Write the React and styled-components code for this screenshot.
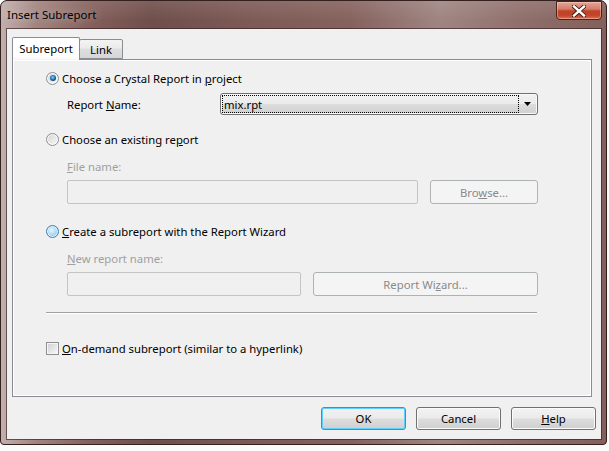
import React from 'react';
import styled, { createGlobalStyle, css } from 'styled-components';

const Global = createGlobalStyle`
  html, body { margin: 0; padding: 0; background: #fbfbfb; }
  body { font-family: "Segoe UI", "Noto Sans", sans-serif; font-size: 11.3px; color: #000; }
  * { box-sizing: border-box; }
  u { text-decoration: underline; text-underline-offset: 1px; text-decoration-thickness: 1px; }
`;

const Page = styled.div`
  width: 609px;
  height: 451px;
  overflow: hidden;
`;

const Window = styled.div`
  width: 607px;
  height: 445px;
  border: 1px solid #33201f;
  border-radius: 7px 7px 4px 4px;
  padding: 0 5px 5px 6px;
  display: flex;
  flex-direction: column;
  background-color: #835f5b;
  background-image:
    linear-gradient(180deg, rgba(255, 255, 255, 0.1) 0px, rgba(255, 255, 255, 0) 20px),
    linear-gradient(90deg, #c2b0ae 0px, #a2847f 35px, #845f5b 90px, #6f4e4b 150px, #7d5a56 250px, #86625e 350px, #9f8582 440px, #8f6f6b 520px, #825f5b 607px);
`;

const TitleBar = styled.div`
  height: 28px;
  display: flex;
  align-items: flex-start;
`;

const Title = styled.div`
  height: 28px;
  line-height: 28px;
  font-size: 11.5px;
  color: #000;
  text-shadow: 0 0 8px rgba(255, 255, 255, 0.55);
`;

const CloseButton = styled.div`
  margin-left: auto;
  margin-right: -1px;
  width: 46px;
  height: 19px;
  border: 1px solid #4a211b;
  border-radius: 0 0 4px 4px;
  display: grid;
  place-items: center;
  background: linear-gradient(180deg, #e6a595 0%, #d47d69 42%, #bf4429 52%, #c4432a 78%, #d96f52 100%);
  box-shadow: inset 0 0 0 1px rgba(255, 215, 205, 0.45);
`;

const Client = styled.div`
  width: 594px;
  height: 410px;
  background: #f0f0f0;
  box-shadow: 0 0 0 1px rgba(50, 30, 30, 0.65);
  padding: 8px 5px 0 5px;
  display: flex;
  flex-direction: column;
`;

const TabStrip = styled.div`
  height: 22px;
  display: flex;
  align-items: flex-end;
`;

const Tab = styled.div`
  position: relative;
  height: ${p => (p.$active ? 23 : 20)}px;
  width: ${p => p.$w}px;
  margin-left: ${p => (p.$active ? 0 : -1)}px;
  margin-bottom: ${p => (p.$active ? -1 : 0)}px;
  z-index: ${p => (p.$active ? 2 : 1)};
  border: 1px solid #898c95;
  border-bottom: ${p => (p.$active ? 'none' : '1px solid #898c95')};
  border-radius: 2px 2px 0 0;
  display: flex;
  align-items: center;
  justify-content: center;
  padding-bottom: ${p => (p.$active ? 1 : 0)}px;
  background: ${p =>
    p.$active
      ? 'linear-gradient(180deg, #ffffff 0%, #ffffff 85%, #f4f4f4 100%)'
      : 'linear-gradient(180deg, #f3f3f3 0%, #ebebeb 45%, #dedede 50%, #d6d6d6 100%)'};
`;

const Panel = styled.div`
  width: 580px;
  height: 338px;
  border: 1px solid #898c95;
  background: #f0f0f0;
  box-shadow: inset -1px -1px 0 #ffffff, inset 1px 1px 0 #ffffff;
  padding-left: 33px;
  display: flex;
  flex-direction: column;
`;

const OptionRow = styled.label`
  display: flex;
  align-items: center;
  gap: 3px;
  height: 16px;
  margin-top: ${p => p.$mt}px;
  color: ${p => (p.$disabled ? '#999' : '#000')};
`;

const FieldRow = styled.div`
  display: flex;
  align-items: center;
  height: ${p => p.$h}px;
  margin-top: ${p => p.$mt}px;
  margin-left: 21px;
  gap: ${p => p.$gap || 0}px;
  color: ${p => (p.$disabled ? '#a0a0a0' : '#000')};
`;

const FieldLabel = styled.span`
  width: ${p => (p.$w ? `${p.$w}px` : 'auto')};
  flex: none;
`;

const Radio = styled.span`
  flex: none;
  width: 13px;
  height: 13px;
  border-radius: 50%;
  display: grid;
  place-items: center;
  border: 1px solid ${p => (p.$hot ? '#3c7fb1' : '#8e8f8f')};
  box-shadow: inset 0 0 0 1px ${p => (p.$hot ? '#e4f4fd' : '#fbfbfb')};
  background: ${p =>
    p.$hot
      ? 'radial-gradient(circle at 42% 38%, #e8f6fe 0px, #bfe3f9 3px, #98d0f2 6px)'
      : 'linear-gradient(135deg, #d2d2d2 0%, #e6e6e6 50%, #f8f8f8 100%)'};
  ${p =>
    p.$checked &&
    css`
      &::after {
        content: '';
        width: 6px;
        height: 6px;
        border-radius: 50%;
        background: radial-gradient(circle at 45% 40%, #8ad2fb 0px, #2b7fc4 2px, #0e3d6c 3.5px);
      }
    `}
`;

const Checkbox = styled.span`
  flex: none;
  width: 13px;
  height: 13px;
  border: 1px solid #8f8f8f;
  box-shadow: inset 0 0 0 1px #f6f6f6;
  background: linear-gradient(135deg, #cfcfcf 0%, #e4e4e4 50%, #fbfbfb 100%);
`;

const Combo = styled.div`
  width: 318px;
  height: 22px;
  border: 1px solid #707070;
  border-radius: 3px;
  display: flex;
  align-items: stretch;
  padding: 1px;
  background: linear-gradient(180deg, #f2f2f2 0%, #ebebeb 48%, #dddddd 52%, #cfcfcf 100%);
  box-shadow: inset 0 0 0 1px #fafafa;
`;

const ComboValue = styled.div`
  flex: 1;
  border: 1px dotted #000;
  padding-left: 1px;
  display: flex;
  align-items: center;
`;

const ComboArrow = styled.div`
  width: 17px;
  display: grid;
  place-items: center;
`;

const TextBox = styled.div`
  width: ${p => p.$w}px;
  height: 24px;
  border: 1px solid #c4c4c4;
  border-radius: 2px;
  background: #f0f0f0;
`;

const Button = styled.button`
  width: ${p => p.$w}px;
  height: ${p => p.$h || 23}px;
  flex: none;
  padding: 0;
  font: inherit;
  border-radius: 3px;
  border: 1px solid #707070;
  color: #000;
  background: linear-gradient(180deg, #f2f2f2 0%, #ebebeb 48%, #dddddd 52%, #cfcfcf 100%);
  box-shadow: inset 0 0 0 1px #fbfbfb;
  ${p =>
    p.$default &&
    css`
      border-color: #3c8fce;
      box-shadow: inset 0 0 0 1px #5fd0fb;
    `}
  ${p =>
    p.disabled &&
    css`
      border-color: #adb2b5;
      background: #f4f4f4;
      color: #8a8a8a;
      box-shadow: none;
    `}
`;

const Separator = styled.div`
  width: 491px;
  height: 2px;
  margin-top: ${p => p.$mt}px;
  border-top: 1px solid #a0a0a0;
  border-bottom: 1px solid #ffffff;
`;

const ButtonRow = styled.div`
  display: flex;
  justify-content: flex-end;
  gap: 10px;
  margin-top: 10px;
`;

export default function App() {
  return (
    <Page>
      <Global />
      <Window>
        <TitleBar>
          <Title>Insert Subreport</Title>
          <CloseButton>
            <svg width="14" height="12" viewBox="0 0 14 12">
              <path d="M2 1.5 L12 10.5 M12 1.5 L2 10.5" stroke="#3a1510" strokeWidth="4.2" strokeLinecap="square" />
              <path d="M2 1.5 L12 10.5 M12 1.5 L2 10.5" stroke="#ffffff" strokeWidth="2.4" strokeLinecap="square" />
            </svg>
          </CloseButton>
        </TitleBar>
        <Client>
          <TabStrip>
            <Tab $active $w={68}>Subreport</Tab>
            <Tab $w={44}>Link</Tab>
          </TabStrip>
          <Panel>
            <OptionRow $mt={10}>
              <Radio $checked />
              <span>Choose a Crystal Report in <u>p</u>roject</span>
            </OptionRow>
            <FieldRow $h={22} $mt={7}>
              <FieldLabel $w={153}>Report <u>N</u>ame:</FieldLabel>
              <Combo>
                <ComboValue>mix.rpt</ComboValue>
                <ComboArrow>
                  <svg width="7" height="4" viewBox="0 0 7 4">
                    <path d="M0 0 H7 L3.5 4 Z" fill="#000" />
                  </svg>
                </ComboArrow>
              </Combo>
            </FieldRow>
            <OptionRow $mt={16}>
              <Radio />
              <span>Choose an existing re<u>p</u>ort</span>
            </OptionRow>
            <FieldRow $h={16} $mt={11} $disabled>
              <FieldLabel><u>F</u>ile name:</FieldLabel>
            </FieldRow>
            <FieldRow $h={24} $mt={6} $gap={12}>
              <TextBox $w={351} />
              <Button $w={108} $h={24} disabled>Bro<u>w</u>se...</Button>
            </FieldRow>
            <OptionRow $mt={19}>
              <Radio $hot />
              <span><u>C</u>reate a subreport with the Report Wizard</span>
            </OptionRow>
            <FieldRow $h={16} $mt={11} $disabled>
              <FieldLabel><u>N</u>ew report name:</FieldLabel>
            </FieldRow>
            <FieldRow $h={24} $mt={6} $gap={12}>
              <TextBox $w={234} />
              <Button $w={225} $h={24} disabled>Report Wi<u>z</u>ard...</Button>
            </FieldRow>
            <Separator $mt={16} />
            <OptionRow $mt={26}>
              <Checkbox />
              <span><u>O</u>n-demand subreport (similar to a hyperlink)</span>
            </OptionRow>
          </Panel>
          <ButtonRow>
            <Button $w={85} $default>OK</Button>
            <Button $w={85}>Cancel</Button>
            <Button $w={85}><u>H</u>elp</Button>
          </ButtonRow>
        </Client>
      </Window>
    </Page>
  );
}
